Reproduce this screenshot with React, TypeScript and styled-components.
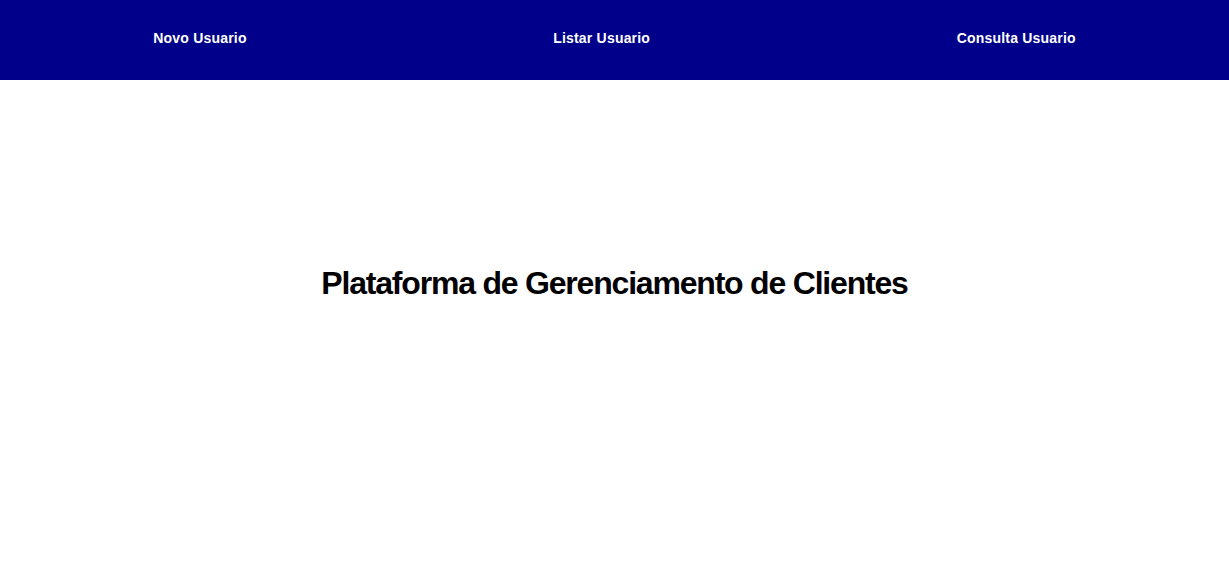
import React from "react";
import styled, { createGlobalStyle } from "styled-components";

const Global = createGlobalStyle`
  html, body { margin: 0; padding: 0; background: #ffffff; }
  body { font-family: "Liberation Sans", Arial, sans-serif; }
`;

const Header = styled.header`
  background: #00008b;
  height: 80px;
  box-sizing: border-box;
  padding-bottom: 5px;
  display: flex;
  align-items: center;
`;

const Nav = styled.nav`
  width: 100%;
  display: flex;
  justify-content: space-around;
  align-items: center;
`;

const NavLink = styled.a`
  color: #ffffff;
  font-weight: 700;
  font-size: 14px;
  letter-spacing: 0.2px;
  text-decoration: none;
  cursor: pointer;
`;

const Main = styled.main`
  display: flex;
  justify-content: center;
  padding-top: 183px;
`;

const Title = styled.h1`
  margin: 0;
  font-size: 32px;
  font-weight: 700;
  letter-spacing: -1.2px;
  color: #000000;
  line-height: 40px;
`;

export default function App() {
  return (
    <>
      <Global />
      <Header>
        <Nav>
          <NavLink>Novo Usuario</NavLink>
          <NavLink>Listar Usuario</NavLink>
          <NavLink>Consulta Usuario</NavLink>
        </Nav>
      </Header>
      <Main>
        <Title>Plataforma de Gerenciamento de Clientes</Title>
      </Main>
    </>
  );
}
